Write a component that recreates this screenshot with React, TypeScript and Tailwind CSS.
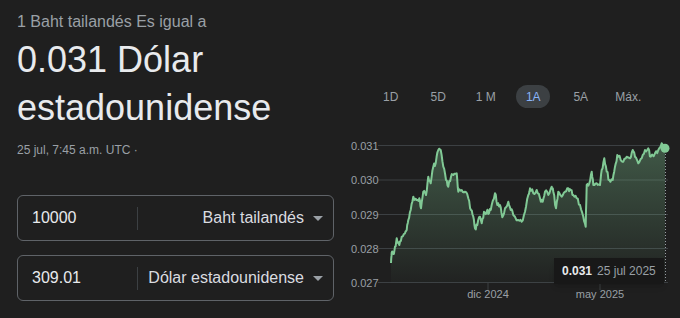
import { useMemo } from "react";

// chart points in page coordinates, traced from the 1A view
const RAW: [number, number][] = [
  [391, 263], [391.7, 252.7], [393.3, 254], [395, 246.7], [396.7, 238.3], [399.3, 245], [401.7, 236.7],
  [405, 233.3], [406.7, 230], [408.3, 220], [410.7, 210], [413.3, 196.7], [416.7, 200], [419.3, 198.3],
  [421, 208.3], [423.3, 191.7], [426, 195], [428.3, 176.7], [430.7, 183.3], [433.3, 166.7], [435.7, 163.3],
  [438.3, 150], [440.7, 150], [443.3, 166.7], [446, 180], [448.3, 186.7], [451, 176.7], [453.3, 175],
  [456.7, 173.3], [458.3, 191.7], [461.7, 190], [465, 191.7], [468.3, 198.3], [471, 210], [473.3, 216.7],
  [475, 228.3], [477.3, 225], [480, 216.7], [481.7, 223.3], [484, 211.7], [486.7, 211.7], [489, 213.3],
  [491.7, 205], [495, 193.3], [497.3, 205], [500, 205], [502.3, 217.3], [505, 208.3], [508.3, 201.7],
  [510.7, 210], [513.3, 215], [518.3, 220], [521.7, 221.7], [525, 211.7], [528.3, 195], [530, 188.3],
  [533.3, 193.3], [536.7, 190], [540, 198.3], [542.7, 201.7], [545, 191.7], [548.3, 195], [551.7, 186.7],
  [553.3, 191.7], [556, 208.3], [558.3, 191.7], [561.7, 196.7], [565, 191.7], [568.3, 188.3], [570.7, 190],
  [573.3, 195], [576.7, 198.3], [580, 205], [583.3, 216.7], [585.7, 226.7], [586.7, 185], [589.3, 183.3],
  [591.7, 171.7], [593.3, 185], [596.7, 183.3], [600, 185], [601.7, 170], [604.3, 158.3], [606.7, 171.7],
  [609.3, 180], [612.7, 180], [615, 166.7], [617.3, 155], [620.7, 160], [623.3, 161.7], [626.7, 156.7],
  [630, 158.3], [632.7, 150], [635, 156.7], [638.3, 163.3], [641.7, 158.3], [645, 150], [648.3, 148.3],
  [650.7, 156.7], [655, 153.3], [658.3, 150], [661.7, 143.3], [665, 148.3],
];

const GRID = [
  { y: 15.5, label: "0.031" },
  { y: 50, label: "0.030" },
  { y: 84.5, label: "0.029" },
  { y: 118.5, label: "0.028" },
  { y: 152.5, label: "0.027" },
];

const RANGES = ["1D", "5D", "1 M", "1A", "5A", "Máx."];

function noise(i: number) {
  const x = Math.sin(i * 12.9898) * 43758.5453;
  return x - Math.floor(x);
}

// adds small daily wobble between traced points
function buildLine() {
  const out: [number, number][] = [];
  RAW.forEach(([x, y], i) => {
    const p: [number, number] = [x - 340, y - 130];
    if (i > 0 && i < RAW.length - 1) {
      const [px, py] = out[out.length - 1];
      for (let k = 1; k <= 2; k++) {
        const t = k / 3;
        out.push([px + (p[0] - px) * t, py + (p[1] - py) * t + (noise(i * 3 + k) - 0.5) * 5]);
      }
    }
    out.push(p);
  });
  return out;
}

function Chart() {
  const { line, area } = useMemo(() => {
    const pts = buildLine();
    const line = pts.map(([x, y], i) => `${i ? "L" : "M"}${x.toFixed(1)},${y.toFixed(1)}`).join(" ");
    const last = pts[pts.length - 1];
    const area = `${line} L${last[0]},152.5 L${pts[0][0]},152.5 Z`;
    return { line, area };
  }, []);

  return (
    <div className="relative mt-[22px] h-[188px] w-[340px]">
      <svg width="340" height="188" viewBox="0 0 340 188">
        <defs>
          <linearGradient id="fill" x1="0" y1="0" x2="0" y2="1">
            <stop offset="0%" stopColor="#81c995" stopOpacity="0.34" />
            <stop offset="100%" stopColor="#81c995" stopOpacity="0.02" />
          </linearGradient>
        </defs>
        {GRID.map((g) => (
          <g key={g.label}>
            <line x1="38" x2="328" y1={g.y} y2={g.y} stroke="#3c4043" strokeWidth="1" />
            <text x="11" y={g.y} dominantBaseline="central" fontSize="11" fill="#9aa0a6">
              {g.label}
            </text>
          </g>
        ))}
        <line x1="148" x2="148" y1="153" y2="160" stroke="#3c4043" />
        <line x1="260" x2="260" y1="153" y2="160" stroke="#3c4043" />
        <text x="148" y="168" textAnchor="middle" fontSize="11" fill="#9aa0a6">dic 2024</text>
        <text x="260" y="168" textAnchor="middle" fontSize="11" fill="#9aa0a6">may 2025</text>
        <path d={area} fill="url(#fill)" />
        <path d={line} fill="none" stroke="#81c995" strokeWidth="2" strokeLinejoin="round" />
        <line x1="325.5" x2="325.5" y1="18" y2="152" stroke="#9aa0a6" strokeDasharray="1 2" />
        <circle cx="325" cy="18.3" r="4.5" fill="#81c995" />
      </svg>
      <div className="absolute left-[214px] top-[128px] flex h-[26px] w-[110px] items-center gap-[5px] bg-[#181818] px-2 text-[12px] shadow-md">
        <span className="font-bold text-[#e8eaed]">0.031</span>
        <span className="text-[#9aa0a6]">25 jul 2025</span>
      </div>
    </div>
  );
}

function ConverterRow({ amount, currency }: { amount: string; currency: string }) {
  return (
    <div className="flex h-[46px] items-center rounded-[6px] border border-[#5f6368]">
      <div className="w-[119px] pl-[14px] text-[16px] text-[#e8eaed]">{amount}</div>
      <div className="h-[23px] w-px bg-[#3c4043]" />
      <div className="flex flex-1 items-center justify-end gap-[9px] pr-[10px] text-[16px] text-[#dadce0]">
        <span>{currency}</span>
        <svg width="10" height="5" viewBox="0 0 10 5">
          <path d="M0 0 L10 0 L5 5 Z" fill="#9aa0a6" />
        </svg>
      </div>
    </div>
  );
}

export default function App() {
  return (
    <div className="flex h-[318px] w-[680px] overflow-hidden bg-[#1f1f1f] font-['Liberation_Sans',Arial,sans-serif]">
      <div className="w-[340px] pl-[17px] pt-[10px]">
        <div className="text-[16px] leading-6 text-[#9aa0a6]">1 Baht tailandés Es igual a</div>
        <div className="mt-[2px] text-[36px] leading-[48px] text-[#e8eaed]">0.031 Dólar estadounidense</div>
        <div className="mt-[10px] text-[12px] leading-4 text-[#9aa0a6]">25 jul, 7:45 a.m. UTC ·</div>
        <div className="mt-[37px] flex w-[317px] flex-col gap-[14px]">
          <ConverterRow amount="10000" currency="Baht tailandés" />
          <ConverterRow amount="309.01" currency="Dólar estadounidense" />
        </div>
      </div>
      <div className="flex-1">
        <div className="flex pl-[27px] pt-[85px]">
          {RANGES.map((r) => (
            <div key={r} className="flex h-[23px] w-[47.5px] items-center justify-center text-[12px]">
              {r === "1A" ? (
                <span className="flex h-[23px] w-[34px] items-center justify-center rounded-full bg-[#3c4043] text-[#8ab4f8]">
                  {r}
                </span>
              ) : (
                <span className="text-[#9aa0a6]">{r}</span>
              )}
            </div>
          ))}
        </div>
        <Chart />
      </div>
    </div>
  );
}
